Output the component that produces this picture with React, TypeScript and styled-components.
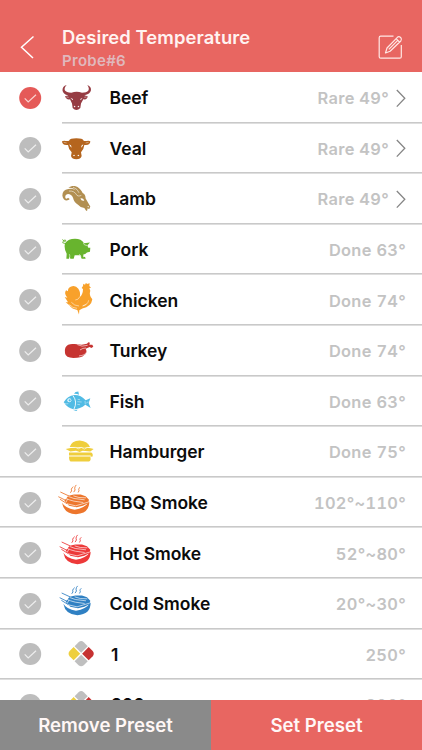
import React from "react";
import styled, { createGlobalStyle } from "styled-components";

const GlobalStyle = createGlobalStyle`
  * { box-sizing: border-box; }
  body { margin: 0; background: #fff; font-family: Inter, "Liberation Sans", sans-serif; }
  button { border: 0; padding: 0; margin: 0; background: none; font: inherit; color: inherit; }
`;

const Screen = styled.div`
  width: 422px;
  height: 750px;
  display: flex;
  flex-direction: column;
  overflow: hidden;
  background: #fff;
`;

const Header = styled.header`
  height: 72px;
  flex: none;
  display: flex;
  align-items: flex-start;
  padding: 25px 18px 0 20px;
  background: #e86661;
  color: #fff;
`;

const BackButton = styled.button`
  width: 42px;
  height: 44px;
  display: flex;
  align-items: center;
`;

const Heading = styled.div`
  flex: 1;
`;

const Title = styled.h1`
  margin: 0;
  font-size: 18.4px;
  line-height: 24px;
  font-weight: 600;
  letter-spacing: 0.08px;
  color: #fff3f1;
  white-space: nowrap;
`;

const Subtitle = styled.div`
  margin-top: 2px;
  font-size: 15px;
  line-height: 20px;
  font-weight: 600;
  letter-spacing: 0.3px;
  color: #e0b8bd;
`;

const EditButton = styled.button`
  width: 26px;
  height: 44px;
  display: flex;
  align-items: center;
`;

const List = styled.main`
  flex: 1;
  min-height: 0;
  overflow: hidden;
`;

const Row = styled.div`
  height: 50.6px;
  display: flex;
  padding-left: 19px;
`;

const CheckCell = styled.div`
  width: 39px;
  display: flex;
  align-items: center;
  padding-top: 1px;
`;

const Body = styled.div`
  flex: 1;
  display: flex;
  align-items: center;
  padding: 2px 16px 0 0;
`;

const Separator = styled.div<{ $full: boolean }>`
  height: 2px;
  margin: -1px 0 -1px ${(p) => (p.$full ? "0" : "62px")};
  background: #c9c9c9;
  border-bottom: 1px solid #dedede;
`;

const Name = styled.span<{ $indent?: boolean }>`
  flex: 1;
  margin-left: ${(p) => (p.$indent ? "13px" : "11.5px")};
  font-size: 17.5px;
  line-height: 24px;
  font-weight: 600;
  letter-spacing: -0.04px;
  color: #0c0c0c;
`;

const Value = styled.span`
  font-size: 16.4px;
  line-height: 24px;
  font-weight: 600;
  letter-spacing: 0.3px;
  font-variant-numeric: tabular-nums;
  color: #c3c3c3;
`;

const ChevronSlot = styled.span`
  display: flex;
  width: 17px;
  padding-left: 7px;
`;

const Footer = styled.footer`
  height: 50px;
  flex: none;
  display: flex;
`;

const FooterButton = styled.button<{ $tone: "muted" | "accent" }>`
  flex: 1;
  background: ${(p) => (p.$tone === "accent" ? "#e86661" : "#8a8a8a")};
  color: #fff7f6;
  font-size: 18.6px;
  font-weight: 600;
  line-height: 50px;
`;

const Check = ({ on }: { on?: boolean }) => (
  <svg width="23" height="22" viewBox="0 0 23 22" fill="none">
    <circle cx="11.2" cy="11" r="11" fill={on ? "#e55a58" : "#bdbdbd"} />
    <path d="M5.7 11.3L9.2 15L17 7.7" stroke={on ? "#f9d3d0" : "#ededed"} strokeWidth="1.2" />
  </svg>
);

const Chevron = () => (
  <svg width="10" height="19" viewBox="0 0 10 19" fill="none">
    <path d="M0.8 1L8.8 9.3L0.8 17.6" stroke="#858585" strokeWidth="1.3" />
  </svg>
);

/* Each glyph is drawn on its own 120 x 152 cell that starts at (174, top). */
const Glyph = ({ top, children }: { top: number; children: React.ReactNode }) => (
  <svg width="40" height="50.6" viewBox={`174 ${top} 120 152`}>
    {children}
  </svg>
);

const Beef = () => (
  <Glyph top={-6}>
    <path fill="#963c43" d="M200 33C182 37 183 62 205 64L195 67C197 74 203 78 210 76L216 89L218 102Q229 114 241 102L243 89L250 76C258 78 263 73 263 67L253 64C277 60 279 39 262 33C272 48 265 56 246 56Q230 50 214 56C194 56 188 46 200 33Z" />
    <path fill="#fff" d="M211 71L219 75L218 79ZM248 71L241 75L242 79ZM221 98Q224 93 226 97L225 101ZM238 98Q236 93 233 97L234 101Z" />
    <path stroke="#fff" strokeWidth="1.4" d="M199 69L206 70M260 69L253 70" />
  </Glyph>
);

const Veal = () => (
  <Glyph top={146}>
    <path fill="#b5651e" d="M186 201C193 196 200 203 207 199Q210 192 229 192Q248 192 251 199C257 203 264 196 271 201C271 209 265 214 253 212Q252 224 243 234L245 245Q242 255 229 255Q216 255 213 245L215 234Q205 224 204 212C192 214 186 209 186 201Z" />
    <path fill="#fff" d="M208 210Q215 212 215 220Q209 218 208 210ZM250 210Q243 212 243 220Q249 218 250 210ZM219 244Q222 239 225 243L222 246ZM238 244Q235 239 232 243L235 246Z" />
    <path stroke="#fff" strokeWidth="1.2" d="M191 204L200 206M266 204L257 206" />
  </Glyph>
);

const Lamb = () => (
  <Glyph top={-2.4}>
    <path fill="#b28f51" d="M205 42C220 30 240 38 248 58Q256 61 257 74L271 98L268 106L262 104Q264 111 259 112L253 103Q242 103 235 94Q222 86 219 72Q214 61 204 61Q194 63 196 73Q199 78 204 72L209 76C201 85 188 79 187 65Q187 49 205 46Q218 43 228 50Q219 40 205 42Z" />
    <path fill="none" stroke="#fff" strokeWidth="1.6" d="M207 52Q223 50 231 65Q236 69 244 65M219 40Q234 46 237 57" />
    <path fill="#fff" d="M241 74Q249 72 253 80Q245 83 241 74ZM262 98L267 97L265 101Z" />
  </Glyph>
);

const Pork = () => (
  <Glyph top={149.4}>
    <path fill="#68b42e" d="M195 207Q205 194 225 194Q244 194 252 207L270 205L262 214L265 221L271 221L270 233L261 235Q256 241 250 241L250 249L255 248L257 254L245 254L241 243L224 243L221 254L211 254L209 245L207 254L199 254L200 239Q191 224 195 207Z" />
    <path fill="none" stroke="#68b42e" strokeWidth="2.6" d="M187 196Q198 207 197 198Q190 194 188 206L199 209" />
    <path fill="none" stroke="#fff" strokeWidth="1.7" d="M250 207Q252 214 261 214M208 240L210 247M238 240L243 247" />
  </Glyph>
);

const Chicken = () => (
  <Glyph top={1}>
    <path fill="#f8a12b" d="M249 37L250 30L255 33L258 27L261 31L269 29L268 37L273 42L268 44L271 51Q266 64 277 77Q274 99 247 105L238 110L237 123L232 109Q216 107 208 95L197 86L204 86L194 70L202 72Q191 60 198 50L204 53Q203 42 212 39Q226 33 235 45Q243 57 239 71Q249 62 249 46L245 43Z" />
    <path fill="none" stroke="#fff" strokeWidth="1.5" d="M239 70Q235 79 226 79M214 86Q223 97 237 97M266 80Q264 93 248 97L259 92M208 93Q218 104 231 104" />
  </Glyph>
);

const Turkey = () => (
  <Glyph top={153}>
    <path fill="#c63431" d="M196 221C202 208 216 209 231 211L245 212L261 209L265 205L270 206L268 212L277 212L280 218L274 222L269 219L257 224Q264 236 252 244Q245 252 220 252Q197 252 195 238Q193 229 196 221Z" />
    <path fill="none" stroke="#fff" strokeWidth="1.8" d="M232 212Q245 220 263 214M240 228Q248 222 258 222M237 246Q256 244 259 235" />
  </Glyph>
);

const Fish = () => (
  <Glyph top={4.8}>
    <path fill="#51bbe4" d="M191 84Q202 64 223 62Q242 61 257 78L271 72L266 86L272 101L256 91Q241 104 220 105Q202 101 191 84ZM222 58Q225 51 235 51L237 61Q230 57 222 58ZM220 107L233 106L229 110Z" />
    <circle cx="208" cy="78" r="6" fill="#e6f7fd" />
    <circle cx="209" cy="78" r="3.4" fill="#51bbe4" />
    <path fill="none" stroke="#fff" strokeWidth="2.6" d="M219 64Q233 82 222 104" />
    <path fill="none" stroke="#fff" strokeWidth="1.3" d="M191 86Q199 90 205 88M233 75L240 76M232 82L245 83M232 90L240 91M255 80L256 90M265 82L259 86" />
  </Glyph>
);

const Burger = () => (
  <Glyph top={156.6}>
    <path fill="#efce3d" d="M209 220Q214 201 239 200Q264 202 270 220ZM197 226Q219 219 239 222Q260 218 281 226L271 233L248 231L239 235L228 231L211 233ZM207 236H272Q280 237 278 248L272 249V245H207ZM207 248H271Q274 262 267 263H212Q207 261 207 248Z" />
    <path fill="none" stroke="#fff" strokeWidth="1.8" d="M209 221L227 221L235 225L244 221L253 226L262 221L272 222" />
  </Glyph>
);

const Grill = ({ color, shift = 0 }: { color: string; shift?: number }) => (
  <Glyph top={8.4}>
    <g transform={`translate(${shift} 0)`}>
      <path fill={color} d="M186 86Q196 103 224 107Q253 103 268 82Q268 118 228 120Q192 119 186 86ZM193 80L205 65L222 61L242 61L257 66L267 77L264 87L249 95L230 99L207 95Z" />
      <path fill="none" stroke={color} strokeWidth="2.6" strokeLinecap="round" d="M212 55Q217 50 214 45Q216 40 219 38M222 53Q228 47 224 42Q225 36 228 33M235 54Q239 49 236 46Q236 42 239 40M182 54L206 65M176 68L198 79M181 76L200 88" />
      <path fill="none" stroke="#fff" strokeWidth="1.9" strokeLinejoin="round" d="M190 70L208 77L222 81L250 85M205 67L222 73L254 77M201 89L227 95L264 84M220 65L237 70L258 71M203 74L198 84" />
    </g>
  </Glyph>
);

const Tiles = () => (
  <Glyph top={163.8}>
    <g transform="translate(243.5 238) rotate(45)">
      <path fill="#bfbfbf" d="M-30 -19Q-29 -29 -19 -30H-2V-2H-30Z" />
      <path fill="#c63131" d="M2 -30H19Q29 -29 30 -19V-2H2Z" />
      <path fill="#bfbfbf" d="M2 2H30V19Q29 29 19 30H2Z" />
      <path fill="#eecf3e" d="M-30 2H-2V30H-19Q-29 29 -30 19Z" />
    </g>
  </Glyph>
);

interface Preset {
  name: string;
  value: string;
  icon: React.ReactNode;
  chosen?: boolean;
  more?: boolean;
  full?: boolean;
  custom?: boolean;
}

const presets: Preset[] = [
  { name: "Beef", value: "Rare 49°", icon: <Beef />, chosen: true, more: true },
  { name: "Veal", value: "Rare 49°", icon: <Veal />, more: true },
  { name: "Lamb", value: "Rare 49°", icon: <Lamb />, more: true },
  { name: "Pork", value: "Done 63°", icon: <Pork /> },
  { name: "Chicken", value: "Done 74°", icon: <Chicken /> },
  { name: "Turkey", value: "Done 74°", icon: <Turkey /> },
  { name: "Fish", value: "Done 63°", icon: <Fish /> },
  { name: "Hamburger", value: "Done 75°", icon: <Burger />, full: true },
  { name: "BBQ Smoke", value: "102°~110°", icon: <Grill color="#ed762c" />, full: true },
  { name: "Hot Smoke", value: "52°~80°", icon: <Grill color="#ed3939" shift={4} />, full: true },
  { name: "Cold Smoke", value: "20°~30°", icon: <Grill color="#2f80c3" shift={4} />, full: true },
  { name: "1", value: "250°", icon: <Tiles />, full: true, custom: true },
  { name: "200", value: "200°", icon: <Tiles />, full: true, custom: true },
];

export default function App() {
  return (
    <Screen>
      <GlobalStyle />
      <Header>
        <BackButton aria-label="Back">
          <svg width="16" height="24" viewBox="0 0 16 24" fill="none">
            <path d="M13.5 1.5L1.5 12.2L13 23" stroke="#fff" strokeWidth="1.5" />
          </svg>
        </BackButton>
        <Heading>
          <Title>Desired Temperature</Title>
          <Subtitle>Probe#6</Subtitle>
        </Heading>
        <EditButton aria-label="Edit">
          <svg width="26" height="26" viewBox="0 0 26 26" fill="none" stroke="#ffe8e5" strokeWidth="1.2" strokeLinejoin="round">
            <path d="M15.5 2.2H2.7Q1.2 2.2 1.2 3.7V22.7Q1.2 24.2 2.7 24.2H21.8Q23.3 24.2 23.3 22.7V11" />
            <path d="M7.5 19L9 14L19.4 3.3Q21 2 22.8 3.7Q24.2 5.4 22.8 7L12.1 17.3ZM18.1 4.6L21.5 8M10.8 15.4L19.5 6.7" />
          </svg>
        </EditButton>
      </Header>
      <List>
        {presets.map((p) => (
          <React.Fragment key={p.name}>
            <Row>
              <CheckCell>
                <Check on={p.chosen} />
              </CheckCell>
              {p.icon}
              <Body>
                <Name $indent={p.custom}>{p.name}</Name>
                <Value>{p.value}</Value>
                {p.more && (
                  <ChevronSlot>
                    <Chevron />
                  </ChevronSlot>
                )}
              </Body>
            </Row>
            <Separator $full={!!p.full} />
          </React.Fragment>
        ))}
      </List>
      <Footer>
        <FooterButton $tone="muted">Remove Preset</FooterButton>
        <FooterButton $tone="accent">Set Preset</FooterButton>
      </Footer>
    </Screen>
  );
}
